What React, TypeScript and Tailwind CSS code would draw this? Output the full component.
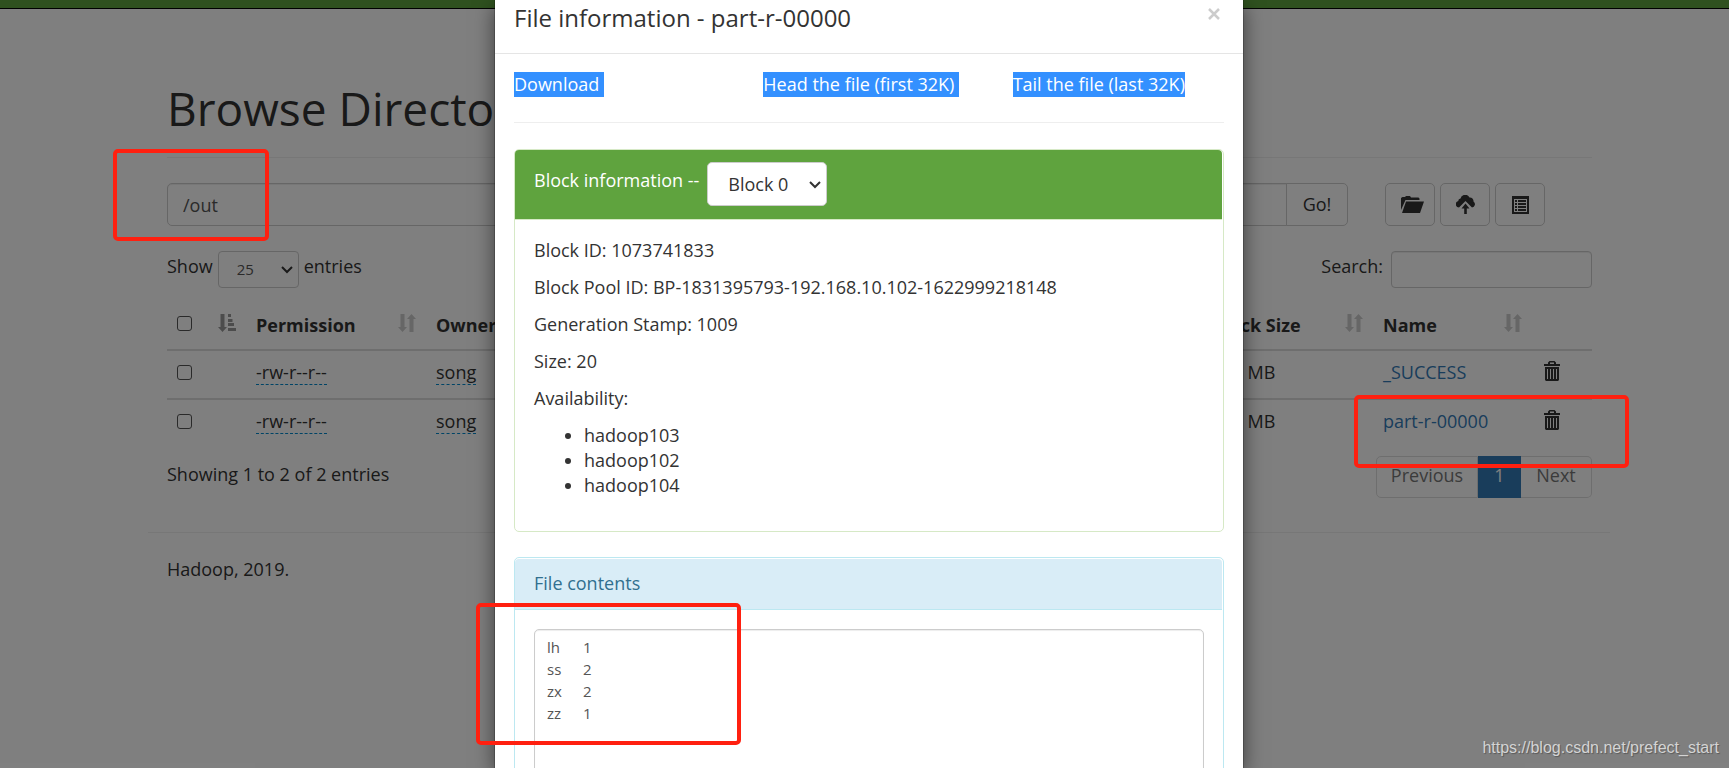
import React from 'react';

interface IconProps {
  className?: string;
}

interface FileEntry {
  permission: string;
  owner: string;
  group: string;
  size: string;
  modified: string;
  replication: string;
  blockSize: string;
  name: string;
}

const files: FileEntry[] = [
  {
    permission: '-rw-r--r--',
    owner: 'song',
    group: 'root',
    size: '0 B',
    modified: 'Jun 07 01:25',
    replication: '3',
    blockSize: '128 MB',
    name: '_SUCCESS'
  },
  {
    permission: '-rw-r--r--',
    owner: 'song',
    group: 'root',
    size: '20 B',
    modified: 'Jun 07 01:25',
    replication: '3',
    blockSize: '128 MB',
    name: 'part-r-00000'
  }
];

const columns = [
  { label: 'Permission', width: 'w-[180px]' },
  { label: 'Owner', width: 'w-[120px]' },
  { label: 'Group', width: 'w-[140px]' },
  { label: 'Size', width: 'w-[110px]' },
  { label: 'Last Modified', width: 'w-[200px]' },
  { label: 'Replication', width: '' },
  { label: 'Block Size', width: 'w-[171px]' },
  { label: 'Name', width: 'w-[159px]' }
];

const blockDetails = [
  'Block ID: 1073741833',
  'Block Pool ID: BP-1831395793-192.168.10.102-1622999218148',
  'Generation Stamp: 1009',
  'Size: 20',
  'Availability:'
];

const hosts = ['hadoop103', 'hadoop102', 'hadoop104'];

const fileContents = 'lh\t1\nss\t2\nzx\t2\nzz\t1';

const FolderOpenIcon: React.FC<IconProps> = ({ className = '' }) => (
  <svg viewBox="0 0 23 17" className={className} fill="currentColor" aria-hidden="true">
    <path d="M0 14V2l1.500-1H4l1-1h4l1 1.500h7.500l1 1V4H4.500z" />
    <path d="M5 5.500h18L19 17H1z" />
  </svg>
);

const CloudUploadIcon: React.FC<IconProps> = ({ className = '' }) => (
  <svg viewBox="0 0 19 19" className={className} fill="currentColor" aria-hidden="true">
    <path d="M3 12.500A3.300 3.300 0 0 1 2.300 6 2.400 2.400 0 0 1 4.500 3.500 4.800 4.800 0 0 1 13.500 2.500 3.600 3.600 0 0 1 17.500 6.500 3.300 3.300 0 0 1 16 12.500L9.500 6z" />
    <path d="M9.500 8.500l4 5h-2.700V19H8.200v-5.500H5.500z" />
  </svg>
);

const ListIcon: React.FC<IconProps> = ({ className = '' }) => (
  <svg viewBox="0 0 17 18" className={className} fill="currentColor" aria-hidden="true">
    <path fillRule="evenodd" d="M0 0h17v18H0zM2 3v13h13V3z" />
    <path d="M3 4h2v2H3zM6 4h8v2H6zM3 7h2v2H3zM6 7h8v2H6zM3 10h2v2H3zM6 10h8v2H6zM3 13h2v2H3zM6 13h8v2H6z" />
  </svg>
);

const TrashIcon: React.FC<IconProps> = ({ className = '' }) => (
  <svg viewBox="0 0 16 20" className={className} fill="currentColor" aria-hidden="true">
    <path fillRule="evenodd" d="M4 3V1.500L5.500 0h5L12 1.500V3h4v2H0V3zm2 0h4V1.500H6z" />
    <path fillRule="evenodd" d="M1 6h14v13l-1 1H2l-1-1zM3 8v10h1V8zM6 8v10h1V8zM9 8v10h1V8zM12 8v10h1V8z" />
  </svg>
);

const SortIcon: React.FC<IconProps> = ({ className = '' }) => (
  <svg viewBox="0 0 18 18" className={className} fill="currentColor" aria-hidden="true">
    <path d="M2.500 0h4v13H9l-4.500 5L0 13h2.500z" />
    <path d="M11.500 18h4V5H18l-4.500-5L9 5h2.500z" />
  </svg>
);

const SortAscIcon: React.FC<IconProps> = ({ className = '' }) => (
  <svg viewBox="0 0 18 18" className={className} fill="currentColor" aria-hidden="true">
    <path d="M2.500 0h4v13H9l-4.500 5L0 13h2.500z" />
    <path d="M10 0h3v3h-3zM10 5h4.500v3H10zM10 9h6v3h-6zM10 14h8v3h-8z" />
  </svg>
);

const ChevronIcon: React.FC<IconProps> = ({ className = '' }) => (
  <svg viewBox="0 0 12 8" className={className} fill="none" stroke="currentColor" strokeWidth="2" aria-hidden="true">
    <path d="M1 1l5 5 5-5" />
  </svg>
);

const Checkbox: React.FC<{ label: string }> = ({ label }) => (
  <input
    type="checkbox"
    aria-label={label}
    className="block w-[15px] h-[15px] appearance-none rounded-[3px] border border-[#555] bg-white"
  />
);

const FileTable: React.FC = () => (
  <table className="w-full table-fixed text-left">
    <colgroup>
      <col className="w-[41px]" />
      <col className="w-[38px]" />
      {columns.map(column => (
        <col key={column.label} className={column.width} />
      ))}
      <col className="w-[60px]" />
    </colgroup>
    <thead>
      <tr className="h-[49px] border-b-2 border-[#ddd]">
        <th className="pl-[10px] pb-1">
          <Checkbox label="Select all" />
        </th>
        <th className="pl-[10px]">
          <SortAscIcon className="w-[18px] h-[18px] -mt-1 text-[#999]" />
        </th>
        {columns.map(column => (
          <th key={column.label} className="px-[10px] font-bold whitespace-nowrap">
            <div className="flex items-center justify-between">
              {column.label}
              <SortIcon className="w-[18px] h-[18px] -mt-1 text-[#ccc]" />
            </div>
          </th>
        ))}
        <th />
      </tr>
    </thead>
    <tbody>
      {files.map(file => (
        <tr key={file.name} className="h-[49px] border-t-2 border-[#ddd] align-top">
          <td className="pl-[10px] pt-[14px]">
            <Checkbox label={`Select ${file.name}`} />
          </td>
          <td />
          <td className="px-[10px] pt-[9px]">
            <span className="border-b border-dashed border-[#0088cc]">{file.permission}</span>
          </td>
          <td className="px-[10px] pt-[9px]">
            <span className="border-b border-dashed border-[#0088cc]">{file.owner}</span>
          </td>
          <td className="px-[10px] pt-[9px]">{file.group}</td>
          <td className="px-[10px] pt-[9px]">{file.size}</td>
          <td className="px-[10px] pt-[9px]">{file.modified}</td>
          <td className="px-[10px] pt-[9px]">{file.replication}</td>
          <td className="px-[10px] pt-[9px]">{file.blockSize}</td>
          <td className="px-[10px] pt-[9px] whitespace-nowrap">
            <a href="#" className="text-[#337ab7]">{file.name}</a>
          </td>
          <td className="pl-3 pt-[10px]">
            <button type="button" aria-label={`Delete ${file.name}`} className="block">
              <TrashIcon className="w-4 h-5" />
            </button>
          </td>
        </tr>
      ))}
    </tbody>
  </table>
);

const BrowsePage: React.FC = () => (
  <div>
    <header className="h-[9px] bg-[#5fa33e] border-b border-black" />
    <div className="pl-[29px]">
      <main className="mx-auto max-w-[1462px]">
        <div className="pl-[19px] pr-[18px]">
          <h1 className="mt-[70px] pb-5 border-b border-[#eee] text-[46px] leading-[58px]">
            Browse Directory
          </h1>

          <div className="mt-[25px] flex">
            <form className="flex flex-1">
              <input
                type="text"
                aria-label="Directory"
                defaultValue="/out"
                className="h-[43px] flex-1 min-w-0 rounded-l-[5px] border border-[#ccc] px-[15px] text-[#555] shadow-[inset_0_1px_1px_rgba(0,0,0,0.075)]"
              />
              <button type="button" className="h-[43px] w-[62px] -ml-px rounded-r-[5px] border border-[#ccc]">
                Go!
              </button>
            </form>
            <div className="ml-[37px] w-[207px] flex gap-[5px]">
              <button type="button" aria-label="Create directory" className="flex w-[50px] h-[43px] items-center justify-center rounded-[5px] border border-[#ccc] pl-1">
                <FolderOpenIcon className="w-[23px] h-[17px]" />
              </button>
              <button type="button" aria-label="Upload files" className="flex w-[50px] h-[43px] items-center justify-center rounded-[5px] border border-[#ccc]">
                <CloudUploadIcon className="w-[19px] h-[19px]" />
              </button>
              <button type="button" aria-label="Cut and paste" className="flex w-[50px] h-[43px] items-center justify-center rounded-[5px] border border-[#ccc]">
                <ListIcon className="w-[17px] h-[18px]" />
              </button>
            </div>
          </div>

          <div className="mt-[25px] flex items-start justify-between">
            <label className="flex gap-[5px]">
              <span className="mt-[3px]">Show</span>
              <span className="relative block">
                <select className="block w-[81px] h-[37px] appearance-none rounded-[4px] border border-[#ccc] bg-white pl-[18px] text-[15px] text-[#555]">
                  <option>25</option>
                </select>
                <ChevronIcon className="absolute right-[6px] top-[15px] w-3 h-2" />
              </span>
              <span className="mt-[3px]">entries</span>
            </label>
            <label className="flex gap-2">
              <span className="mt-[3px]">Search:</span>
              <input
                type="search"
                className="w-[201px] h-[37px] rounded-[4px] border border-[#ccc] px-3 shadow-[inset_0_1px_1px_rgba(0,0,0,0.075)]"
              />
            </label>
          </div>

          <div className="mt-[13px]">
            <FileTable />
          </div>

          <div className="mt-2 flex items-start justify-between">
            <p className="mt-[6px]">Showing 1 to 2 of 2 entries</p>
            <nav className="flex h-[42px] text-[#777]">
              <button type="button" className="rounded-l-[5px] border border-[#ddd] pb-1 w-[102px]">Previous</button>
              <button type="button" className="w-[43px] bg-[#337ab7] pb-1 text-white">1</button>
              <button type="button" className="rounded-r-[5px] border border-l-0 border-[#ddd] pb-1 w-[71px]">Next</button>
            </nav>
          </div>
        </div>

        <footer className="mt-[34px] border-t border-[#eee] px-[19px] pt-6">Hadoop, 2019.</footer>
      </main>
    </div>
  </div>
);

const FileInfoModal: React.FC = () => (
  <div className="absolute inset-0 overflow-hidden bg-black/50 pl-[9px]">
    <div
      role="dialog"
      aria-label="File information"
      className="mx-auto h-full max-w-[750px] border-x border-black/20 bg-white bg-clip-padding shadow-[0_6px_19px_rgba(0,0,0,0.5)]"
    >
      <div className="flex h-[54px] justify-between border-b border-[#e5e5e5] px-[19px]">
        <h4 className="mt-[3px] text-[24px] leading-[30px]">File information - part-r-00000</h4>
        <button type="button" aria-label="Close" className="h-7 px-1 text-[#ccc]">
          <svg viewBox="0 0 12 12" className="w-3 h-3" stroke="currentColor" strokeWidth="2.500" aria-hidden="true">
            <path d="M1 1l10 10M11 1L1 11" />
          </svg>
        </button>
      </div>

      <div className="px-[19px] pt-[18px]">
        <div className="-mx-[19px] grid grid-cols-3 text-white">
          <div className="pl-[19px]">
            <a href="#" className="inline-block bg-[#3390ff] pr-[5px]">Download</a>
          </div>
          <div className="pl-[19px]">
            <a href="#" className="inline-block bg-[#3390ff] pr-[5px]">Head the file (first 32K)</a>
          </div>
          <div className="pl-[19px]">
            <a href="#" className="inline-block bg-[#3390ff]">Tail the file (last 32K)</a>
          </div>
        </div>
        <hr className="mt-[25px] mb-[26px] border-[#eee]" />

        <section className="mb-[25px] rounded-[5px] border border-[#d6e9c6]">
          <div className="mr-px flex h-[70px] items-start rounded-t-[4px] border-b border-[#d6e9c6] bg-[#5fa33e] pl-[19px] pt-3 text-white">
            <label htmlFor="block" className="mt-[6px]">Block information --</label>
            <span className="relative ml-2 block">
              <select id="block" className="block w-[120px] h-11 appearance-none rounded-[5px] border border-[#ccc] bg-white pl-5 text-[#333]">
                <option>Block 0</option>
              </select>
              <ChevronIcon className="absolute right-[6px] top-[19px] w-3 h-2 text-[#333]" />
            </span>
          </div>
          <div className="flex flex-col gap-3 px-[19px] pt-[18px] pb-[33px]">
            {blockDetails.map(detail => (
              <p key={detail}>{detail}</p>
            ))}
            <ul className="list-disc pl-[50px]">
              {hosts.map(host => (
                <li key={host}>{host}</li>
              ))}
            </ul>
          </div>
        </section>

        <section className="rounded-[5px] border border-[#bce8f1]">
          <div className="mt-px mr-px h-[51px] rounded-t-[4px] border-b border-[#bce8f1] bg-[#d9edf7] pl-[19px] pt-3 text-[#31708f]">
            <label htmlFor="contents">File contents</label>
          </div>
          <div className="p-[19px]">
            <textarea
              id="contents"
              readOnly
              defaultValue={fileContents}
              className="block w-full h-[260px] resize-none rounded-[5px] border border-[#ccc] px-3 py-[6px] text-[15px] leading-[22px] text-[#555] shadow-[inset_0_1px_1px_rgba(0,0,0,0.075)] [tab-size:36px]"
            />
          </div>
        </section>
      </div>
    </div>
  </div>
);

const App: React.FC = () => {
  return (
    <div className="relative h-screen overflow-hidden bg-white font-['Open_Sans','Noto_Sans',sans-serif] text-[18px] leading-[25px] text-[#333]">
      <BrowsePage />
      <FileInfoModal />

      {/* Highlight boxes */}
      <div className="pointer-events-none absolute left-[113px] top-[149px] w-[156px] h-[92px] rounded-[5px] border-4 border-[#ff2010]" />
      <div className="pointer-events-none absolute left-[1354px] top-[395px] w-[275px] h-[73px] rounded-[5px] border-4 border-[#ff2010]" />
      <div className="pointer-events-none absolute left-[476px] top-[603px] w-[265px] h-[142px] rounded-[5px] border-4 border-[#ff2010]" />

      <p className="absolute right-[10px] bottom-2 font-['Liberation_Sans',sans-serif] text-[16px] leading-6 text-[#d4d4d4] [text-shadow:1px_1px_1px_rgba(0,0,0,0.3)]">
        https://blog.csdn.net/prefect_start
      </p>
    </div>
  );
};

export default App;
